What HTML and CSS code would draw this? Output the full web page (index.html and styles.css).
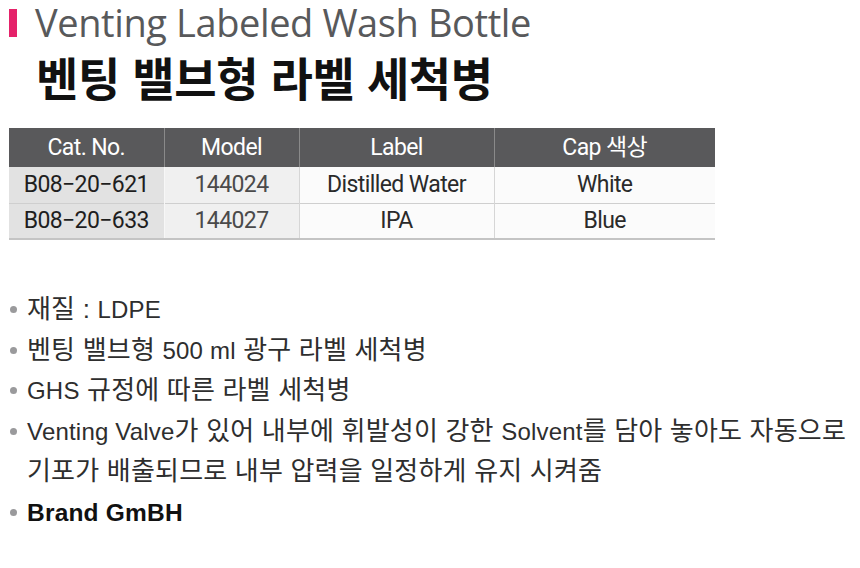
FILE: index.html
```html
<!DOCTYPE html>
<html lang="ko">
<head>
<meta charset="utf-8">
<link rel="stylesheet" href="styles.css">
</head>
<body>
<div class="page">
  <header class="head">
    <h2 class="title-en"><span class="bar"></span>Venting Labeled Wash Bottle</h2>
    <h1 class="title-ko">벤팅 밸브형 라벨 세척병</h1>
  </header>

  <table class="spec">
    <thead>
      <tr>
        <th class="c1">Cat. No.</th>
        <th class="c2">Model</th>
        <th class="c3">Label</th>
        <th class="c4">Cap 색상</th>
      </tr>
    </thead>
    <tbody>
      <tr>
        <td class="c1">B08−20−621</td>
        <td class="c2">144024</td>
        <td class="c3">Distilled Water</td>
        <td class="c4">White</td>
      </tr>
      <tr>
        <td class="c1">B08−20−633</td>
        <td class="c2">144027</td>
        <td class="c3">IPA</td>
        <td class="c4">Blue</td>
      </tr>
    </tbody>
  </table>

  <ul class="features">
    <li><span class="dot"></span><span>재질 : <span class="en">LDPE</span></span></li>
    <li><span class="dot"></span><span>벤팅 밸브형 <span class="en">500 ml</span> 광구 라벨 세척병</span></li>
    <li><span class="dot"></span><span><span class="en">GHS</span> 규정에 따른 라벨 세척병</span></li>
    <li><span class="dot"></span><span><span class="en">Venting Valve</span>가 있어 내부에 휘발성이 강한 <span class="en">Solvent</span>를 담아 놓아도 자동으로<br>기포가 배출되므로 내부 압력을 일정하게 유지 시켜줌</span></li>
    <li class="brand"><span class="dot"></span><span><span class="en">Brand GmBH</span></span></li>
  </ul>
</div>
</body>
</html>
```

FILE: styles.css
```css
* { box-sizing: border-box; }
html, body { margin: 0; padding: 0; background: #ffffff; }
body { width: 860px; height: 568px; overflow: hidden; }

.page { padding: 0 0 0 9px; }

.head { margin: 0; }

.title-en {
  margin: 0;
  display: flex;
  align-items: center;
  gap: 18px;
  font-family: "Open Sans", "Noto Sans", sans-serif;
  font-weight: 400;
  font-size: 38px;
  line-height: 44px;
  color: #58595b;
  letter-spacing: -0.4px;
}
.bar {
  display: inline-block;
  width: 8px;
  height: 28px;
  background: #e5226a;
  margin-top: 2px;
}

.title-ko {
  margin: 2px 0 0 27px;
  font-family: "Noto Sans CJK KR", sans-serif;
  font-weight: 700;
  font-size: 46px;
  line-height: 60px;
  letter-spacing: -0.4px;
  color: #111111;
}

.spec {
  margin-top: 22px;
  width: 706px;
  border-collapse: collapse;
  table-layout: fixed;
  font-family: Roboto, "Noto Sans CJK KR", sans-serif;
  font-size: 23px;
  line-height: 1;
  letter-spacing: -0.6px;
  border-bottom: 2px solid #c4c4c4;
}
.spec .c1 { width: 155px; }
.spec .c2 { width: 135px; }
.spec .c3 { width: 195px; }
.spec .c4 { width: 221px; }

.spec th {
  height: 39px;
  padding: 0;
  vertical-align: middle;
  background: #59595b;
  color: #ffffff;
  font-weight: 400;
  text-align: center;
  border-left: 1px solid #8a8a8a;
}
.spec th:first-child { border-left: none; }

.spec td {
  height: 36px;
  padding: 0;
  vertical-align: middle;
  text-align: center;
  color: #2a2a2a;
  background: #fbfbfb;
  border-top: 1px solid #cfcfcf;
  border-left: 1px solid #d6d6d6;
}
.spec td.c1 { background: #e2e2e2; border-left: none; color: #1e1e1e; }
.spec td.c2 { background: #f0f0f0; border-left: 1px solid #f7f7f7; color: #4a4a4a; }
.spec tbody tr:first-child td { border-top: none; }

.features {
  list-style: none;
  margin: 49px 0 0 0;
  padding: 0;
  font-family: "Liberation Sans", "Noto Sans CJK KR", sans-serif;
  font-size: 26px;
  line-height: 40.5px;
  color: #2e2e2e;
  letter-spacing: 0.2px;
  white-space: nowrap;
}
.features .en {
  font-size: 24px;
  line-height: 1;
}
.features li {
  display: grid;
  grid-template-columns: 18px 1fr;
  align-items: start;
}
.dot {
  width: 7px;
  height: 7px;
  border-radius: 50%;
  background: #9a9a9c;
  margin: 17px 0 0 1px;
}
.features .brand { font-weight: 700; color: #111111; }
.features .brand .en { font-size: 24.5px; }
```
